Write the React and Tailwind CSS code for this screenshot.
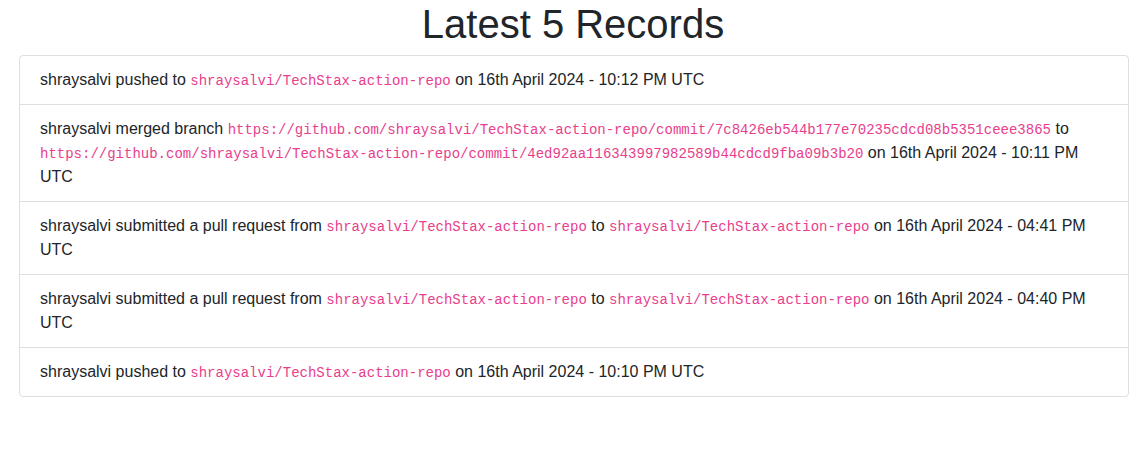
const records = [
  { parts: ['shraysalvi pushed to ', { code: 'shraysalvi/TechStax-action-repo' }, ' on 16th April 2024 - 10:12 PM UTC'] },
  {
    parts: [
      'shraysalvi merged branch ',
      { code: 'https://github.com/shraysalvi/TechStax-action-repo/commit/7c8426eb544b177e70235cdcd08b5351ceee3865' },
      ' to ',
      { code: 'https://github.com/shraysalvi/TechStax-action-repo/commit/4ed92aa116343997982589b44cdcd9fba09b3b20' },
      ' on 16th April 2024 - 10:11 PM UTC',
    ],
  },
  {
    parts: [
      'shraysalvi submitted a pull request from ',
      { code: 'shraysalvi/TechStax-action-repo' },
      ' to ',
      { code: 'shraysalvi/TechStax-action-repo' },
      ' on 16th April 2024 - 04:41 PM UTC',
    ],
  },
  {
    parts: [
      'shraysalvi submitted a pull request from ',
      { code: 'shraysalvi/TechStax-action-repo' },
      ' to ',
      { code: 'shraysalvi/TechStax-action-repo' },
      ' on 16th April 2024 - 04:40 PM UTC',
    ],
  },
  { parts: ['shraysalvi pushed to ', { code: 'shraysalvi/TechStax-action-repo' }, ' on 16th April 2024 - 10:10 PM UTC'] },
];

export default function App() {
  return (
    <div className="min-h-[458px] bg-white text-[#212529] font-['Liberation_Sans',Arial,sans-serif] text-base leading-6">
      <h1 className="mb-[7px] text-center text-[40px] leading-[48px] font-normal">Latest 5 Records</h1>
      <ul className="ml-[19px] w-[1110px] rounded border border-black/[0.125]">
        {records.map((r, i) => (
          <li key={i} className={`px-5 py-3 ${i > 0 ? 'border-t border-black/[0.125]' : ''}`}>
            {r.parts.map((p, j) =>
              typeof p === 'string' ? (
                <span key={j}>{p}</span>
              ) : (
                <code key={j} className="font-['Liberation_Mono','Courier_New',monospace] text-[14px] leading-none text-[#e83e8c] break-words">
                  {p.code}
                </code>
              )
            )}
          </li>
        ))}
      </ul>
    </div>
  );
}
